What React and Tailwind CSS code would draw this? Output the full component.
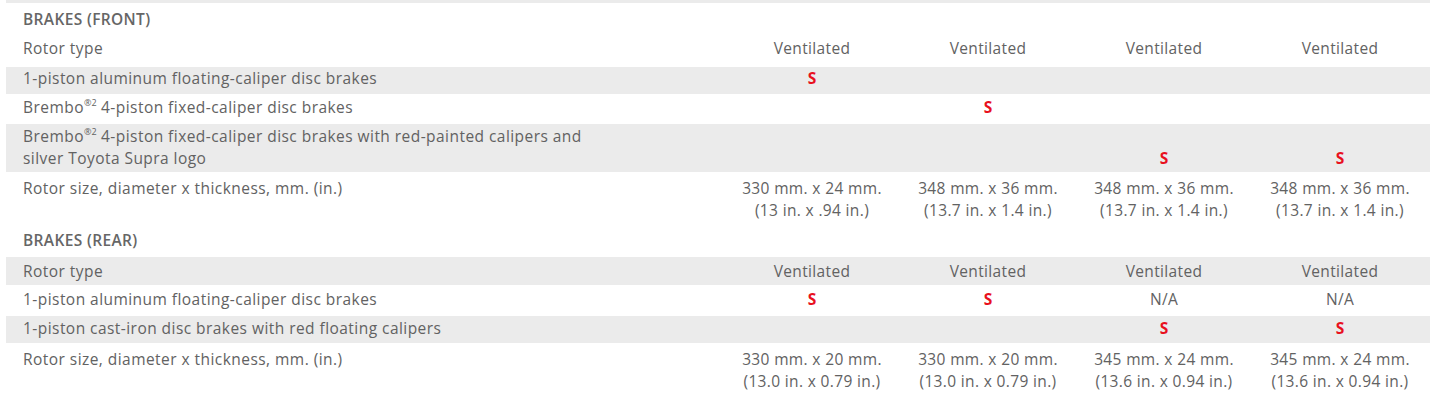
import React from "react";

const S = () => <span className="text-[#e8101e] font-bold tracking-normal">S</span>;

const Sup = () => (
  <sup className="text-[9px] leading-none tracking-normal relative -top-[1px] align-[6px]">®2</sup>
);

function Row({ gray, h, pt, label, values, valuePt }) {
  return (
    <div
      className={`flex ${gray ? "bg-[#ebebeb]" : ""}`}
      style={{ height: h }}
    >
      <div className="w-[718px] pl-[17px] pr-4 tracking-[0.45px]" style={{ paddingTop: pt }}>
        {label}
      </div>
      {values.map((v, i) => (
        <div
          key={i}
          className="w-[176px] text-center"
          style={{ paddingTop: valuePt ?? pt }}
        >
          {v}
        </div>
      ))}
    </div>
  );
}

function Header({ h, pt, children }) {
  return (
    <div className="flex" style={{ height: h }}>
      <div className="pl-[17px] font-semibold text-[#666666]" style={{ paddingTop: pt }}>
        {children}
      </div>
    </div>
  );
}

export default function App() {
  return (
    <div className="bg-white w-[1448px] h-[414px] overflow-hidden font-['Open_Sans',sans-serif] text-[15.5px] tracking-[0.35px] leading-[22px] text-[#626262]">
      <div className="ml-[6px] w-[1424px]">
        <div className="h-[3px] bg-[#ebebeb]" />
        <Header h={31} pt={5}>BRAKES (FRONT)</Header>
        <Row
          h={33}
          pt={3}
          label="Rotor type"
          values={["Ventilated", "Ventilated", "Ventilated", "Ventilated"]}
        />
        <Row
          gray
          h={27}
          pt={0}
          label="1-piston aluminum floating-caliper disc brakes"
          values={[<S />, "", "", ""]}
        />
        <Row
          h={30}
          pt={2}
          label={
            <>
              Brembo<Sup /> 4-piston fixed-caliper disc brakes
            </>
          }
          values={["", <S />, "", ""]}
        />
        <Row
          gray
          h={48}
          pt={1}
          valuePt={23}
          label={
            <>
              Brembo<Sup /> 4-piston fixed-caliper disc brakes with red-painted calipers and
              <br />
              silver Toyota Supra logo
            </>
          }
          values={["", "", <S />, <S />]}
        />
        <Row
          h={56}
          pt={5}
          label="Rotor size, diameter x thickness, mm. (in.)"
          values={[
            <>330 mm. x 24 mm.<br />(13 in. x .94 in.)</>,
            <>348 mm. x 36 mm.<br />(13.7 in. x 1.4 in.)</>,
            <>348 mm. x 36 mm.<br />(13.7 in. x 1.4 in.)</>,
            <>348 mm. x 36 mm.<br />(13.7 in. x 1.4 in.)</>,
          ]}
        />
        <Header h={29} pt={1}>BRAKES (REAR)</Header>
        <Row
          gray
          h={28}
          pt={3}
          label="Rotor type"
          values={["Ventilated", "Ventilated", "Ventilated", "Ventilated"]}
        />
        <Row
          h={31}
          pt={3}
          label="1-piston aluminum floating-caliper disc brakes"
          values={[<S />, <S />, "N/A", "N/A"]}
        />
        <Row
          gray
          h={27}
          pt={1}
          label="1-piston cast-iron disc brakes with red floating calipers"
          values={["", "", <S />, <S />]}
        />
        <Row
          h={60}
          pt={5}
          label="Rotor size, diameter x thickness, mm. (in.)"
          values={[
            <>330 mm. x 20 mm.<br />(13.0 in. x 0.79 in.)</>,
            <>330 mm. x 20 mm.<br />(13.0 in. x 0.79 in.)</>,
            <>345 mm. x 24 mm.<br />(13.6 in. x 0.94 in.)</>,
            <>345 mm. x 24 mm.<br />(13.6 in. x 0.94 in.)</>,
          ]}
        />
      </div>
    </div>
  );
}
